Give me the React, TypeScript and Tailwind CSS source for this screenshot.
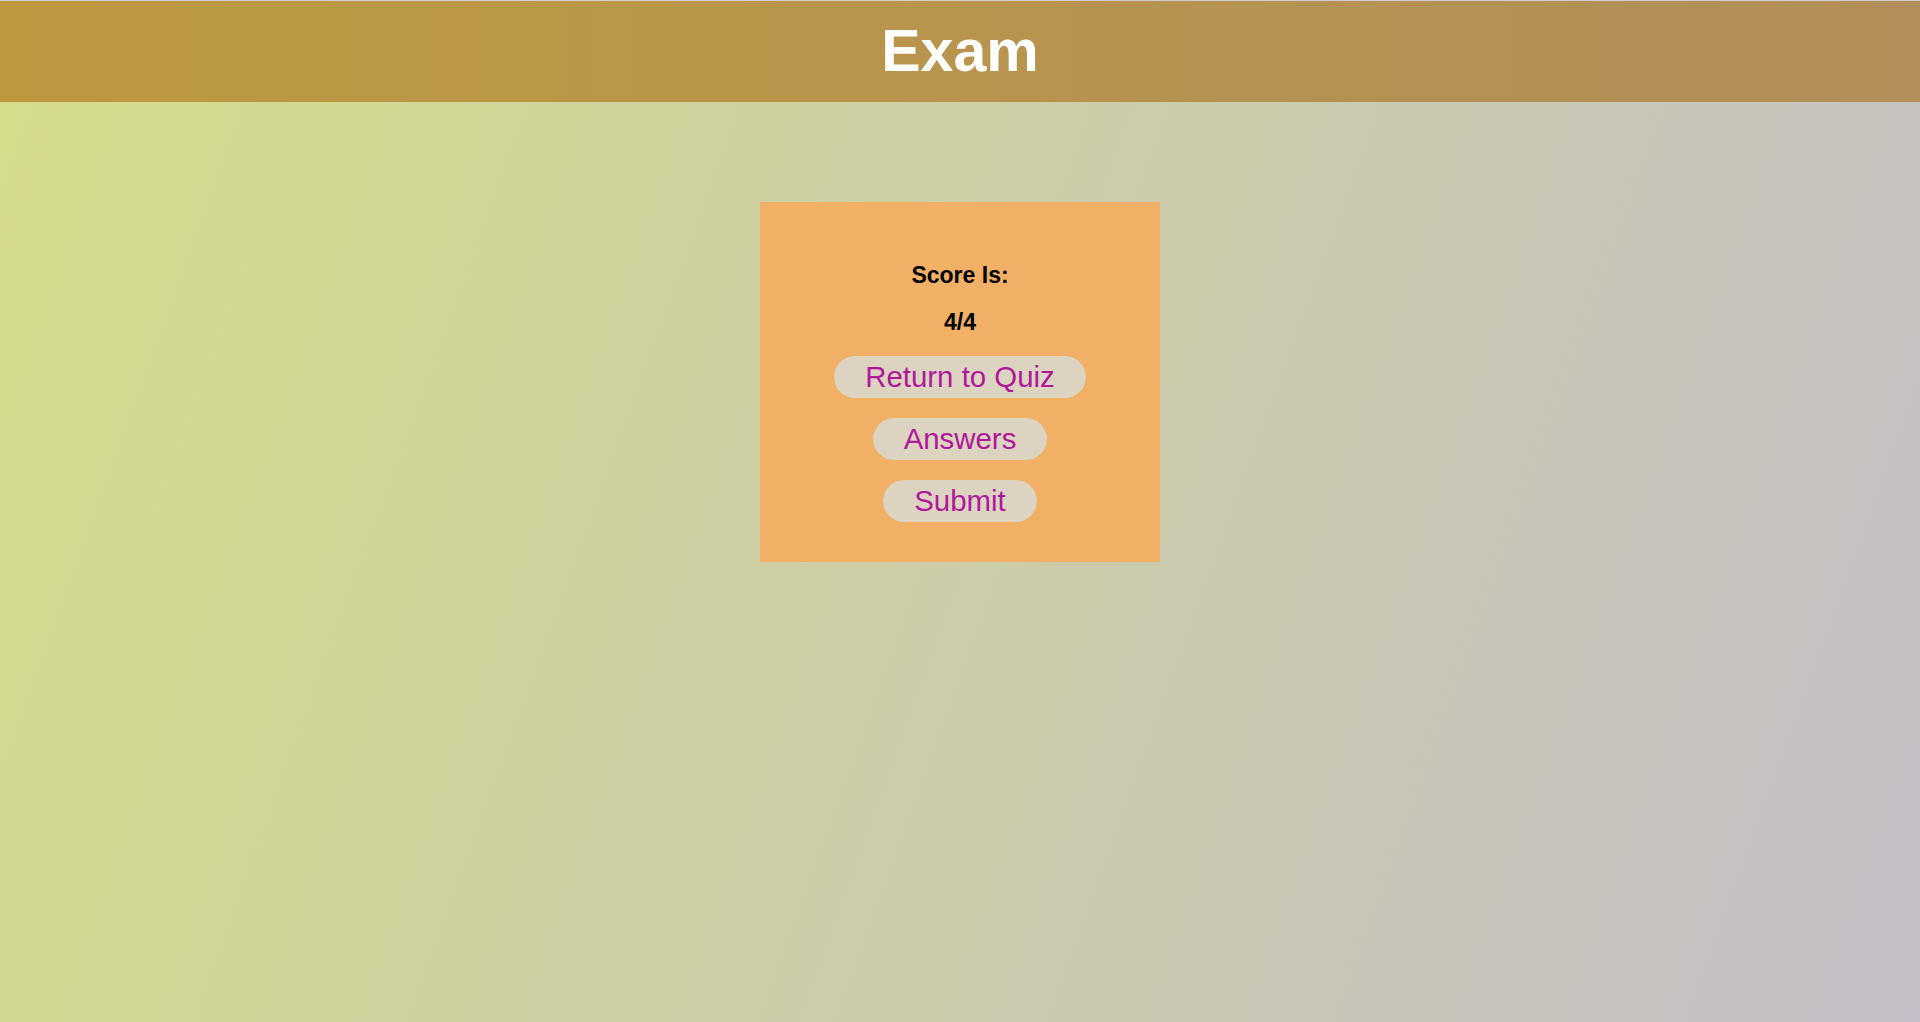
export default function App() {
  const buttons = ["Return to Quiz", "Answers", "Submit"];

  return (
    <div className="min-h-screen w-full bg-[linear-gradient(110deg,#d5dc88,#c3bec7)] font-['Liberation_Sans',Arial,sans-serif]">
      <div className="h-px bg-[#cfcfd3]" />
      <header className="flex h-[101px] items-center justify-center bg-[linear-gradient(to_right,#bd9a40,#b38e5a)]">
        <h1 className="text-[59px] font-bold leading-none text-white">Exam</h1>
      </header>

      <main className="flex justify-center pt-[100px]">
        <div className="flex h-[360px] w-[400px] flex-col items-center bg-[#f2af66] pt-[60px]">
          <p className="h-[26px] text-[23px] font-bold leading-[26px] text-black">Score Is:</p>
          <p className="mt-[21px] h-[26px] text-[23px] font-bold leading-[26px] text-black">4/4</p>

          <div className="mt-[21px] flex flex-col items-center gap-[20px]">
            {buttons.map((label) => (
              <button
                key={label}
                className="flex h-[42px] items-center rounded-full bg-[#ddd3c1] px-[31px] text-[29.4px] leading-none text-[#b0189c]"
              >
                {label}
              </button>
            ))}
          </div>
        </div>
      </main>
    </div>
  );
}
